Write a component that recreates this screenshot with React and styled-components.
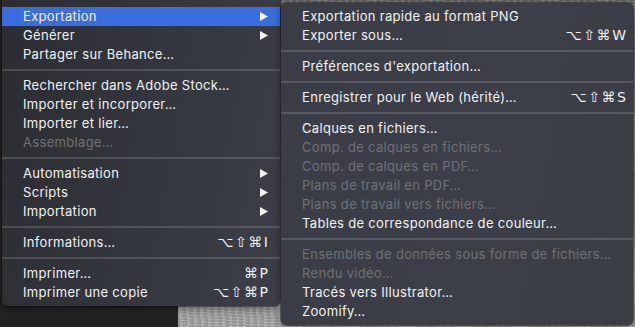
import React from "react";
import styled, { createGlobalStyle } from "styled-components";

const Global = createGlobalStyle`
  html, body { margin: 0; padding: 0; background: #242424; }
  body { font-family: Inter, "DejaVu Sans", sans-serif; }
  #root { width: 635px; height: 327px; overflow: hidden; }
`;

const Workspace = styled.div`
  position: relative;
  width: 635px;
  height: 327px;
  display: grid;
  grid-template-columns: 178px 1fr;
  overflow: hidden;
`;

const DarkPanel = styled.div`
  background: #232323;
`;

const Photo = styled.div`
  background:
    repeating-linear-gradient(87deg, rgba(0,0,0,0.08) 0 2px, rgba(255,255,255,0.06) 2px 5px, rgba(0,0,0,0.05) 5px 7px),
    repeating-linear-gradient(3deg, rgba(255,255,255,0.07) 0 1px, rgba(0,0,0,0.06) 1px 3px),
    linear-gradient(180deg, #6d6d6d 0%, #8a8a8a 60%, #a9a9a9 100%);
`;

const Menu = styled.div`
  position: absolute;
  left: ${(p) => p.$left}px;
  top: ${(p) => p.$top}px;
  width: ${(p) => p.$width}px;
  padding: ${(p) => p.$padTop}px 0 ${(p) => p.$padBottom}px;
  box-sizing: border-box;
  border-radius: ${(p) => p.$radius};
  background: ${(p) => p.$bg};
  box-shadow: 0 2px 8px rgba(0, 0, 0, 0.45), 0 0 0 0.5px rgba(0, 0, 0, 0.6);
  display: flex;
  flex-direction: column;
  font-family: Inter, "DejaVu Sans", sans-serif;
  font-size: 13px;
  letter-spacing: 0.32px;
  color: #f1f2f4;
`;

const Row = styled.div`
  height: 19px;
  display: flex;
  align-items: center;
  padding: 0 ${(p) => p.$padRight}px 0 21px;
  background: ${(p) => (p.$active ? "#3a6ddd" : "transparent")};
  color: ${(p) => (p.$disabled ? "#6e7177" : "#f1f2f4")};
  white-space: nowrap;
`;

const Label = styled.span`
  flex: 1;
  line-height: 19px;
`;

const Shortcut = styled.span`
  font-family: "DejaVu Sans", sans-serif;
  font-size: 14px;
  letter-spacing: 1.6px;
  margin-right: -1.6px;
  line-height: 19px;
`;

const Separator = styled.div`
  height: 12px;
  display: flex;
  align-items: center;
  &::after {
    content: "";
    flex: 1;
    height: 2px;
    background: rgba(255, 255, 255, 0.14);
  }
`;

const Arrow = () => (
  <svg width="8" height="9" viewBox="0 0 8 9" style={{ display: "block" }}>
    <path d="M0 0 L8 4.5 L0 9 Z" fill="#f2f2f2" />
  </svg>
);

const mainItems = [
  { label: "Exportation", sub: true, active: true },
  { label: "Générer", sub: true },
  { label: "Partager sur Behance…" },
  "sep",
  { label: "Rechercher dans Adobe Stock…" },
  { label: "Importer et incorporer…" },
  { label: "Importer et lier…" },
  { label: "Assemblage…", disabled: true },
  "sep",
  { label: "Automatisation", sub: true },
  { label: "Scripts", sub: true },
  { label: "Importation", sub: true },
  "sep",
  { label: "Informations…", key: "⌥⇧⌘I" },
  "sep",
  { label: "Imprimer…", key: "⌘P" },
  { label: "Imprimer une copie", key: "⌥⇧⌘P" },
];

const subItems = [
  { label: "Exportation rapide au format PNG" },
  { label: "Exporter sous…", key: "⌥⇧⌘W" },
  "sep",
  { label: "Préférences d'exportation…" },
  "sep",
  { label: "Enregistrer pour le Web (hérité)…", key: "⌥⇧⌘S" },
  "sep",
  { label: "Calques en fichiers…" },
  { label: "Comp. de calques en fichiers…", disabled: true },
  { label: "Comp. de calques en PDF…", disabled: true },
  { label: "Plans de travail en PDF…", disabled: true },
  { label: "Plans de travail vers fichiers…", disabled: true },
  { label: "Tables de correspondance de couleur…" },
  "sep",
  { label: "Ensembles de données sous forme de fichiers…", disabled: true },
  { label: "Rendu vidéo…", disabled: true },
  { label: "Tracés vers Illustrator…" },
  { label: "Zoomify…" },
];

const renderItems = (items, padRight) =>
  items.map((it, i) =>
    it === "sep" ? (
      <Separator key={i} />
    ) : (
      <Row key={i} $active={it.active} $disabled={it.disabled} $padRight={padRight}>
        <Label>{it.label}</Label>
        {it.key && <Shortcut>{it.key}</Shortcut>}
        {it.sub && <Arrow />}
      </Row>
    )
  );

export default function App() {
  return (
    <>
      <Global />
      <Workspace>
        <DarkPanel />
        <Photo />
        <Menu
          $left={2}
          $top={0}
          $width={278}
          $padTop={7}
          $padBottom={4}
          $radius="0 0 5px 5px"
          $bg="linear-gradient(100deg, #2b2d32 0%, #33363c 50%, #3c3f47 100%)"
        >
          {renderItems(mainItems, 12)}
        </Menu>
        <Menu
          $left={281}
          $top={3}
          $width={352}
          $padTop={4}
          $padBottom={4}
          $radius="5px"
          $bg="linear-gradient(100deg, #3a3d45 0%, #3c3f47 60%, #3a3d44 100%)"
        >
          {renderItems(subItems, 7)}
        </Menu>
      </Workspace>
    </>
  );
}
